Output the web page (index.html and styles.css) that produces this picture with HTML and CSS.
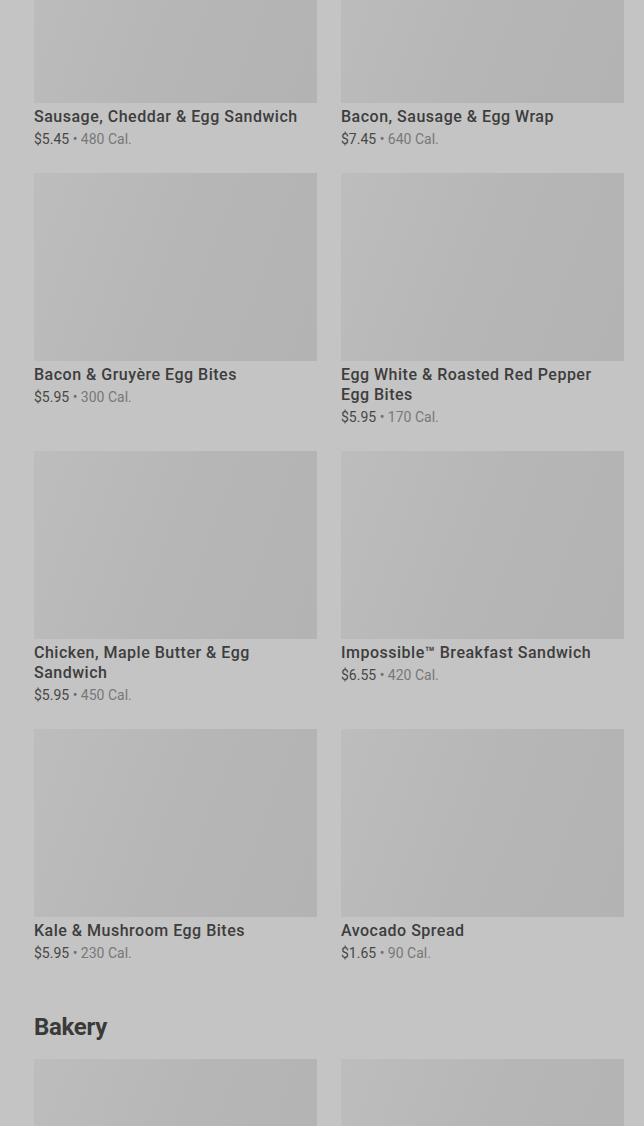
FILE: index.html
```html
<!DOCTYPE html>
<html lang="en">
<head>
    <meta charset="UTF-8">
    <title>Menu</title>
    <link rel="stylesheet" href="styles.css">
</head>
<body>
    <main class="menu-page">
        <!-- Breakfast (scrolled) -->
        <section class="category scrolled">
            <div class="item-grid">
                <div class="item">
                    <div class="item-img"></div>
                    <div class="item-name">Sausage, Cheddar &amp; Egg Sandwich</div>
                    <div class="item-meta"><span class="price">$5.45</span> • <span class="cal">480 Cal.</span></div>
                </div>
                <div class="item">
                    <div class="item-img"></div>
                    <div class="item-name">Bacon, Sausage &amp; Egg Wrap</div>
                    <div class="item-meta"><span class="price">$7.45</span> • <span class="cal">640 Cal.</span></div>
                </div>
                <div class="item">
                    <div class="item-img"></div>
                    <div class="item-name">Bacon &amp; Gruyère Egg Bites</div>
                    <div class="item-meta"><span class="price">$5.95</span> • <span class="cal">300 Cal.</span></div>
                </div>
                <div class="item">
                    <div class="item-img"></div>
                    <div class="item-name">Egg White &amp; Roasted Red Pepper Egg Bites</div>
                    <div class="item-meta"><span class="price">$5.95</span> • <span class="cal">170 Cal.</span></div>
                </div>
                <div class="item">
                    <div class="item-img"></div>
                    <div class="item-name">Chicken, Maple Butter &amp; Egg Sandwich</div>
                    <div class="item-meta"><span class="price">$5.95</span> • <span class="cal">450 Cal.</span></div>
                </div>
                <div class="item">
                    <div class="item-img"></div>
                    <div class="item-name">Impossible™ Breakfast Sandwich</div>
                    <div class="item-meta"><span class="price">$6.55</span> • <span class="cal">420 Cal.</span></div>
                </div>
                <div class="item">
                    <div class="item-img"></div>
                    <div class="item-name">Kale &amp; Mushroom Egg Bites</div>
                    <div class="item-meta"><span class="price">$5.95</span> • <span class="cal">230 Cal.</span></div>
                </div>
                <div class="item">
                    <div class="item-img"></div>
                    <div class="item-name">Avocado Spread</div>
                    <div class="item-meta"><span class="price">$1.65</span> • <span class="cal">90 Cal.</span></div>
                </div>
            </div>
        </section>

        <!-- Bakery -->
        <section class="category">
            <h2 class="category-title">Bakery</h2>
            <div class="item-grid">
                <div class="item">
                    <div class="item-img"></div>
                </div>
                <div class="item">
                    <div class="item-img"></div>
                </div>
            </div>
        </section>
    </main>
</body>
</html>
```

FILE: styles.css
```css
/* Reset */
* {
    margin: 0;
    padding: 0;
    box-sizing: border-box;
}

body {
    font-family: Roboto, "Liberation Sans", sans-serif;
    background-color: #c4c4c4;
    color: #3b3b3b;
    overflow: hidden;
}

/* Contenido */
.menu-page {
    padding: 0 20px 0 34px;
}

.category.scrolled {
    margin-top: -85px;
}

.category-title {
    font-size: 24px;
    line-height: 32px;
    font-weight: 700;
    color: #3a3a3a;
    margin: 48px 0 16px;
    letter-spacing: -0.3px;
}

.item-grid {
    display: grid;
    grid-template-columns: 1fr 1fr;
    column-gap: 24px;
    row-gap: 24px;
}

.item-img {
    height: 188px;
    background: linear-gradient(110deg, #bdbdbd 0%, #b6b6b6 50%, #b3b3b3 100%);
}

.item-name {
    margin-top: 4px;
    font-size: 16px;
    line-height: 20px;
    font-weight: 500;
    letter-spacing: 0.5px;
    color: #3d3d3d;
}

.item-meta {
    margin-top: 2px;
    font-size: 14px;
    line-height: 20px;
    color: #6f6f6f;
}

.price {
    color: #474747;
}

.cal {
    color: #787878;
}
```
